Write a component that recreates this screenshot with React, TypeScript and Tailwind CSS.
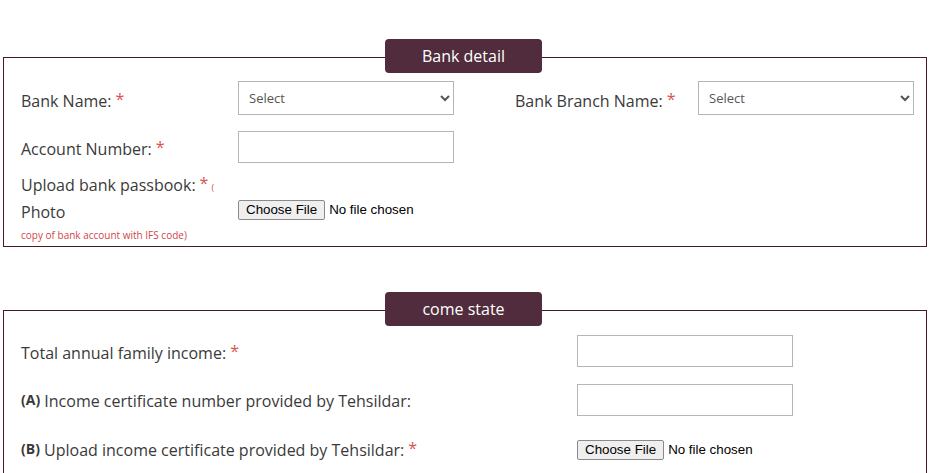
import React from "react";

const Star = () => (
  <sup className="text-[#d9534f] text-[16px] ml-[4px] relative top-[-2px]">*</sup>
);

const Badge = ({ children }: { children: React.ReactNode }) => (
  <div className="absolute left-[381px] top-[-19px] w-[157px] h-[34px] rounded-[4px] bg-[#512c3c] text-white text-[16px] flex items-center justify-center">
    {children}
  </div>
);

const FileInput = () => (
  <div className="flex items-center" style={{ fontFamily: '"Liberation Sans", Arial, sans-serif' }}>
    <span className="h-[20px] px-[7px] flex items-center bg-[#efefef] border border-[#8a8a8a] rounded-[2px] text-[13.33px] text-black">
      Choose File
    </span>
    <span className="ml-[4px] text-[13.33px] text-black">No file chosen</span>
  </div>
);

const Select = () => (
  <select className="w-[216px] h-[34px] border border-[#b5b5b5] bg-white text-[13px] text-[#555] pl-[6px] pr-[6px]">
    <option>Select</option>
  </select>
);

const TextInput = () => (
  <input type="text" className="w-[216px] h-[32px] border border-[#b5b5b5] bg-white" />
);

export default function App() {
  return (
    <div
      className="w-[932px] h-[473px] overflow-hidden bg-white pt-[57px] px-[3px] text-[#3a3a3a]"
      style={{ fontFamily: '"Open Sans", "Noto Sans", sans-serif' }}
    >
      <div className="relative w-[924px] h-[190px] border border-[#4a1c22] pl-[17px] pt-[23px]">
        <Badge>Bank detail</Badge>
        <div className="flex items-center h-[34px]">
          <div className="w-[217px] text-[16px] pt-[5px]">
            Bank Name:<Star />
          </div>
          <Select />
          <div className="w-[183px] ml-[61px] text-[16px] pt-[5px]">
            Bank Branch Name:<Star />
          </div>
          <Select />
        </div>
        <div className="flex items-center h-[32px] mt-[16px]">
          <div className="w-[217px] text-[16px] pt-[4px]">
            Account Number:<Star />
          </div>
          <TextInput />
        </div>
        <div className="flex items-center mt-[10px]">
          <div className="w-[217px] text-[16px] leading-[25px]">
            <div className="whitespace-nowrap">
              Upload bank passbook:<Star />
              <span className="text-[#d9534f] text-[9px] ml-[3px]">(</span>
            </div>
            <div>Photo</div>
            <div className="text-[#d0454a] text-[10px] leading-[20px] whitespace-nowrap">copy of bank account with IFS code)</div>
          </div>
          <div className="mt-[2px]">
            <FileInput />
          </div>
        </div>
      </div>

      <div className="relative w-[924px] h-[200px] border border-[#4a1c22] mt-[63px] pl-[17px] pt-[24px]">
        <Badge>come state</Badge>
        <div className="flex items-center h-[32px]">
          <div className="w-[556px] text-[16px] pt-[4px]">
            Total annual family income:<Star />
          </div>
          <TextInput />
        </div>
        <div className="flex items-center h-[32px] mt-[17px]">
          <div className="w-[556px] text-[16px] pt-[2px]">
            <span className="font-bold text-[14px] relative top-[-2px]">(A)</span> Income certificate number provided by Tehsildar:
          </div>
          <TextInput />
        </div>
        <div className="flex items-center h-[32px] mt-[17px]">
          <div className="w-[556px] text-[16px] pt-[2px]">
            <span className="font-bold text-[14px] relative top-[-2px]">(B)</span> Upload income certificate provided by Tehsildar:<Star />
          </div>
          <div className="mt-[2px]">
            <FileInput />
          </div>
        </div>
      </div>
    </div>
  );
}
